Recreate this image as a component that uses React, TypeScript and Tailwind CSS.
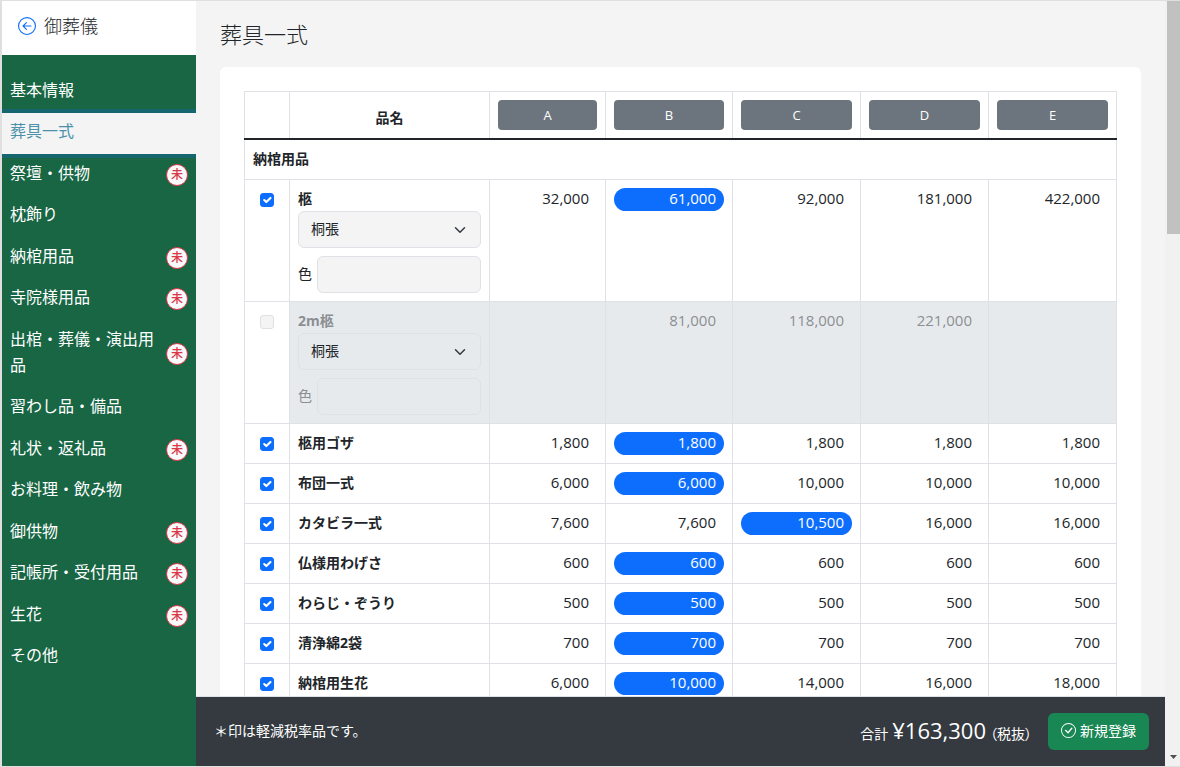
import { useState } from "react";
import { BsArrowLeftCircle, BsCheckCircle } from "react-icons/bs";

const menu = [
  { label: "基本情報" },
  { label: "葬具一式", active: true },
  { label: "祭壇・供物", pending: true },
  { label: "枕飾り" },
  { label: "納棺用品", pending: true },
  { label: "寺院様用品", pending: true },
  { label: "出棺・葬儀・演出用品", pending: true },
  { label: "習わし品・備品" },
  { label: "礼状・返礼品", pending: true },
  { label: "お料理・飲み物" },
  { label: "御供物", pending: true },
  { label: "記帳所・受付用品", pending: true },
  { label: "生花", pending: true },
  { label: "その他" },
];

const plans = ["A", "B", "C", "D", "E"];

type Item = {
  name: string;
  prices: string[];
  selected?: number;
  options?: boolean;
  disabled?: boolean;
};

const items: Item[] = [
  { name: "柩", prices: ["32,000", "61,000", "92,000", "181,000", "422,000"], selected: 1, options: true },
  { name: "2m柩", prices: ["", "81,000", "118,000", "221,000", ""], options: true, disabled: true },
  { name: "柩用ゴザ", prices: ["1,800", "1,800", "1,800", "1,800", "1,800"], selected: 1 },
  { name: "布団一式", prices: ["6,000", "6,000", "10,000", "10,000", "10,000"], selected: 1 },
  { name: "カタビラ一式", prices: ["7,600", "7,600", "10,500", "16,000", "16,000"], selected: 2 },
  { name: "仏様用わげさ", prices: ["600", "600", "600", "600", "600"], selected: 1 },
  { name: "わらじ・ぞうり", prices: ["500", "500", "500", "500", "500"], selected: 1 },
  { name: "清浄綿2袋", prices: ["700", "700", "700", "700", "700"], selected: 1 },
  { name: "納棺用生花", prices: ["6,000", "10,000", "14,000", "16,000", "18,000"], selected: 1 },
];

function Sidebar() {
  return (
    <aside className="flex w-[194px] shrink-0 flex-col bg-[#186644] text-base">
      <a href="#back" className="flex h-[54px] items-center gap-2 bg-white px-4 pb-1 text-lg font-light text-[#212529]">
        <BsArrowLeftCircle size={18} className="text-[#0d6efd]" aria-hidden="true" />
        御葬儀
      </a>
      <ul className="mb-[88px] flex grow flex-col pt-4">
        {menu.map((m) => (
          <li
            key={m.label}
            className={
              m.active
                ? "flex grow bg-[#f4f4f4] text-[#4a91a9] shadow-[0_4px_0_#16666f,0_-4px_0_#16666f]"
                : "flex grow text-white"
            }
          >
            <a href="#menu" className="flex grow items-center justify-between gap-2 px-2 leading-[26px]">
              <span className="pb-1">{m.label}</span>
              {m.pending && (
                <span className="flex size-[22px] shrink-0 items-center justify-center rounded-full border border-[#dc3545] bg-[#f8f9fa] text-xs font-medium text-[#dc3545]">
                  未
                </span>
              )}
            </a>
          </li>
        ))}
      </ul>
    </aside>
  );
}

function Check({ label, disabled }: { label: string; disabled?: boolean }) {
  const [checked, setChecked] = useState(!disabled);
  return (
    <span className="relative mx-auto mt-[5px] block size-[14px]">
      <input
        type="checkbox"
        aria-label={label}
        checked={checked}
        disabled={disabled}
        onChange={(e) => setChecked(e.target.checked)}
        className="block size-[14px] appearance-none rounded-[3px] border border-[#dee2e6] bg-[#f4f4f4] checked:border-[#0d6efd] checked:bg-[#0d6efd]"
      />
      {checked && (
        <svg viewBox="0 0 20 20" className="pointer-events-none absolute inset-0 size-[14px]" aria-hidden="true">
          <path fill="none" stroke="#fff" strokeLinecap="round" strokeLinejoin="round" strokeWidth="3" d="m6 10 3 3 6-6" />
        </svg>
      )}
    </span>
  );
}

function Options({ id, disabled }: { id: string; disabled?: boolean }) {
  const box = disabled ? "border-[#dee2e6] bg-[#e7eaed]" : "border-[#dee2e6] bg-[#f4f4f4]";
  return (
    <>
      <div className="relative">
        <select
          aria-label="種類"
          className={`block h-[37px] w-full appearance-none rounded-md border px-3 pb-0.5 text-[#212529] ${box}`}
        >
          <option>桐張</option>
        </select>
        <svg viewBox="0 0 16 16" className="pointer-events-none absolute top-[13px] right-[15px] size-3" aria-hidden="true">
          <path fill="none" stroke="#343a40" strokeLinecap="round" strokeLinejoin="round" strokeWidth="2" d="m2 5 6 6 6-6" />
        </svg>
      </div>
      <div className="mt-2 flex items-center gap-[5px]">
        <label htmlFor={id} className="shrink-0 pb-0.5">色</label>
        <input id={id} type="text" disabled={disabled} className={`h-[37px] min-w-0 grow rounded-md border px-3 ${box}`} />
      </div>
    </>
  );
}

function PriceTable() {
  return (
    <table className="w-full table-fixed border-collapse">
      <colgroup>
        <col className="w-[45px]" />
        <col className="w-[200px]" />
        <col className="w-[116px]" />
        <col className="w-[127px]" />
        <col span={3} />
      </colgroup>
      <thead>
        <tr className="border-b-2 border-b-[#212529]">
          <th className="border-x border-t border-x-[#dee2e6] border-t-[#dee2e6]" />
          <th className="border-x border-t border-x-[#dee2e6] border-t-[#dee2e6] pt-1">品名</th>
          {plans.map((p) => (
            <th key={p} className="border-x border-t border-x-[#dee2e6] border-t-[#dee2e6] p-2">
              <button type="button" className="block h-[30px] w-full rounded bg-[#6c757d] text-[13px] font-normal text-white">
                {p}
              </button>
            </th>
          ))}
        </tr>
      </thead>
      <tbody>
        <tr>
          <th colSpan={7} className="border-x border-b border-[#dee2e6] px-2 pt-[7px] pb-[9px] text-left">納棺用品</th>
        </tr>
        {items.map((item, row) => (
          <tr key={item.name} className={item.disabled ? "text-[#8b8f93]" : ""}>
            <td className="border border-[#dee2e6] p-2 align-top">
              <Check label={item.name} disabled={item.disabled} />
            </td>
            <th className={`border border-[#dee2e6] p-2 text-left align-top font-normal ${item.disabled ? "bg-[#e7eaed]" : ""}`}>
              <div className="h-[23px] leading-[21px] font-bold">{item.name}</div>
              {item.options && <Options id={`color-${row}`} disabled={item.disabled} />}
            </th>
            {item.prices.map((price, i) => (
              <td
                key={plans[i]}
                className={`border border-[#dee2e6] p-2 text-right align-top text-[15px] ${item.disabled ? "bg-[#e7eaed]" : ""}`}
              >
                <span
                  className={`block h-[23px] rounded-full px-2 leading-[21px] ${item.selected === i ? "bg-[#0d6efd] text-white" : ""}`}
                >
                  {price}
                </span>
              </td>
            ))}
          </tr>
        ))}
      </tbody>
    </table>
  );
}

function Footer() {
  return (
    <footer className="flex h-[70px] shrink-0 items-center justify-between border-t border-[#dee2e6] bg-[#343a40] pr-4 pl-[18px] text-white">
      <p className="pb-0.5">＊印は軽減税率品です。</p>
      <div className="flex items-center gap-4">
        <p className="flex items-baseline gap-1">
          合計
          <span className="text-[22px]">¥163,300</span>
          <span className="[font-feature-settings:'palt']">（税抜）</span>
        </p>
        <button type="button" className="flex h-[37px] items-center gap-1 rounded-md bg-[#198754] px-[13px] pb-0.5">
          <BsCheckCircle size={15} aria-hidden="true" />
          新規登録
        </button>
      </div>
    </footer>
  );
}

export default function App() {
  return (
    <div
      lang="ja"
      className="flex h-screen border-y border-l-2 border-[#dfdfdf] bg-[#f4f4f4] font-['Open_Sans','Noto_Sans_CJK_JP',sans-serif] text-sm leading-[23px] text-[#212529]"
    >
      <Sidebar />
      <div className="flex min-w-0 grow flex-col">
        <main className="min-h-0 grow overflow-y-auto px-6 pt-[18px] [scrollbar-width:none]">
          <h1 className="mb-[18px] text-[22px] leading-[30px] font-light">葬具一式</h1>
          <div className="rounded-md bg-white p-6">
            <PriceTable />
          </div>
        </main>
        <Footer />
      </div>
      <div className="flex w-[15px] shrink-0 flex-col items-end justify-between bg-[#f1f1f1]" aria-hidden="true">
        <div className="h-[233px] w-[13px] bg-[#c1c1c1]" />
        <svg viewBox="0 0 13 17" className="h-[17px] w-[13px]">
          <path fill="#505050" d="M3 6h7l-3.500 4z" />
        </svg>
      </div>
    </div>
  );
}
